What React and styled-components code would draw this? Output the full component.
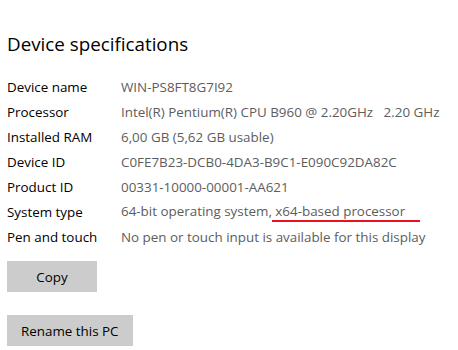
import styled, { createGlobalStyle } from "styled-components";

const GlobalStyle = createGlobalStyle`
  body {
    margin: 0;
    background: #fff;
    font-family: "Open Sans", "Noto Sans", sans-serif;
  }
`;

const Page = styled.div`
  display: flex;
  flex-direction: column;
  padding: 30px 0 0 7px;
`;

const Title = styled.h1`
  margin: 0 0 16px;
  font-size: 18.8px;
  font-weight: 400;
  color: #000;
  line-height: 28px;
`;

const SpecGrid = styled.dl`
  display: grid;
  grid-template-columns: 114px 1fr;
  grid-auto-rows: 25px;
  align-items: center;
  margin: 0;
  font-size: 13.4px;
`;

const Label = styled.dt`
  color: #000;
`;

const Value = styled.dd`
  margin: 0;
  color: #5d5d5d;
  white-space: pre;
`;

const Marked = styled.span`
  display: inline-block;
  line-height: 17px;
  border-bottom: 2px solid #e81123;
  padding-right: 15px;
`;

const Actions = styled.div`
  display: flex;
  flex-direction: column;
  align-items: flex-start;
  gap: 23px;
  margin-top: 12px;
`;

const Button = styled.button`
  font-family: inherit;
  font-size: 13.4px;
  color: #000;
  background: #cccccc;
  border: none;
  height: 31px;
  min-width: ${(p) => p.$minWidth || "auto"};
  padding: 0 14px;
`;

const specs = [
  ["Device name", "WIN-PS8FT8G7I92"],
  ["Processor", "Intel(R) Pentium(R) CPU B960 @ 2.20GHz   2.20 GHz"],
  ["Installed RAM", "6,00 GB (5,62 GB usable)"],
  ["Device ID", "C0FE7B23-DCB0-4DA3-B9C1-E090C92DA82C"],
  ["Product ID", "00331-10000-00001-AA621"],
  ["System type", null],
  ["Pen and touch", "No pen or touch input is available for this display"],
];

export default function App() {
  return (
    <Page>
      <GlobalStyle />
      <Title>Device specifications</Title>
      <SpecGrid>
        {specs.map(([label, value]) => (
          <>
            <Label key={label}>{label}</Label>
            <Value key={label + "-v"}>
              {value ?? (
                <>
                  64-bit operating system,<Marked> x64-based processor</Marked>
                </>
              )}
            </Value>
          </>
        ))}
      </SpecGrid>
      <Actions>
        <Button $minWidth="90px">Copy</Button>
        <Button>Rename this PC</Button>
      </Actions>
    </Page>
  );
}
